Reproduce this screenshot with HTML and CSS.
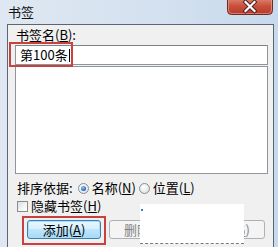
FILE: index.html
```html
<!DOCTYPE html>
<html lang="zh">
<head>
<meta charset="utf-8">
<title>书签</title>
<link rel="stylesheet" href="styles.css">
</head>
<body>
<div class="window">
  <div class="titlebar">
    <span class="title">书签</span>
    <div class="close">
      <svg width="46" height="15" viewBox="0 0 46 15">
        <defs>
          <linearGradient id="cg" x1="0" y1="0" x2="0" y2="1">
            <stop offset="0" stop-color="#d9826f"/>
            <stop offset="0.45" stop-color="#c9503c"/>
            <stop offset="1" stop-color="#b8382a"/>
          </linearGradient>
        </defs>
        <path d="M0.5 -1 V10.5 Q0.5 14.5 4.5 14.5 H41.5 Q45.5 14.5 45.5 10.5 V-1" fill="url(#cg)" stroke="#6e2a22"/>
        <path d="M1.5 -1 V10 Q1.5 13.5 5 13.5 H41 Q44.5 13.5 44.5 10 V-1" fill="none" stroke="#e9a898" stroke-opacity="0.6"/>
        <path d="M18.5 2 L27.5 11 M27.5 2 L18.5 11" stroke="#4a1d18" stroke-width="4" stroke-linecap="square"/>
        <path d="M18.5 2 L27.5 11 M27.5 2 L18.5 11" stroke="#ffffff" stroke-width="2.2" stroke-linecap="square"/>
      </svg>
    </div>
  </div>
  <div class="client">
    <div class="label">书签名(<u>B</u>):</div>
    <div class="textbox">第100条<span class="caret"></span></div>
    <div class="listbox"></div>
    <div class="sortrow">
      <span>排序依据:</span>
      <span class="radio first checked"></span><span>名称(<u>N</u>)</span>
      <span class="radio"></span><span>位置(<u>L</u>)</span>
    </div>
    <div class="checkrow">
      <span class="checkbox"></span><span>隐藏书签(<u>H</u>)</span>
    </div>
    <div class="buttons">
      <div class="btn focused">添加(<u>A</u>)</div>
      <div class="btn disabled">删除(<u>D</u>)</div>
      <div class="btn disabled">定位(<u>G</u>)</div>
    </div>
  </div>
  <div class="mark mark-name"></div>
  <div class="mark mark-add"></div>
  <div class="blot"><span class="dot"></span></div>
</div>
</body>
</html>
```

FILE: styles.css
```css
* { box-sizing: border-box; }
html, body { margin: 0; padding: 0; }
body {
  width: 278px;
  height: 247px;
  overflow: hidden;
  font-family: "Noto Sans CJK SC", "Noto Sans", sans-serif;
  font-size: 13px;
  color: #000;
}
u { text-decoration: underline; text-underline-offset: 1px; }

.window {
  position: relative;
  width: 278px;
  height: 247px;
  background: linear-gradient(to right, #dfe8f2 0%, #d3e0ef 60%, #c7d9ed 100%);
  display: flex;
  flex-direction: column;
}

.titlebar {
  height: 24px;
  flex: none;
  display: flex;
  justify-content: space-between;
  align-items: flex-start;
  padding-left: 8px;
  padding-right: 5px;
}
.title {
  margin-top: 4px;
  line-height: 15px;
  font-size: 13px;
  color: #111;
}
.close { width: 46px; height: 15px; }
.close svg { display: block; }

.client {
  flex: 1;
  margin: 0 4px 0 7px;
  border: 1px solid #5b6673;
  border-bottom: none;
  background: #f0f0f0;
  padding: 2px 5px 0 7px;
  display: flex;
  flex-direction: column;
}

.label {
  line-height: 15px;
  padding-left: 1px;
}

.textbox {
  margin-top: 3px;
  height: 20px;
  border: 1px solid #8f959c;
  border-top-color: #7d838a;
  background: #fff;
  padding-left: 4px;
  line-height: 18px;
  display: flex;
  align-items: center;
}
.caret {
  display: inline-block;
  width: 1px;
  height: 13px;
  background: #000;
  margin-left: 1px;
}

.listbox {
  margin-top: 1px;
  height: 108px;
  border: 1px solid #8f959c;
  background: #fff;
}

.sortrow, .checkrow {
  display: flex;
  align-items: center;
  line-height: 16px;
  height: 16px;
  padding-left: 2px;
}
.sortrow { margin-top: 6px; }
.checkrow { margin-top: 2px; }

.radio {
  width: 11px;
  height: 11px;
  border-radius: 50%;
  border: 1px solid #8a8d90;
  background: radial-gradient(circle at 40% 35%, #ffffff 0%, #e8e9ea 60%, #d0d2d4 100%);
  margin: 0 3px 0 3px;
  flex: none;
  position: relative;
}
.radio.first { margin-left: 5px; }
.radio.checked::after {
  content: "";
  position: absolute;
  left: 2px;
  top: 2px;
  width: 5px;
  height: 5px;
  border-radius: 50%;
  background: radial-gradient(circle at 40% 35%, #9fd0f5 0%, #2b78c8 55%, #0e3f84 100%);
}

.checkbox {
  width: 11px;
  height: 11px;
  border: 1px solid #8a8d90;
  background: linear-gradient(135deg, #dcdee0 0%, #f4f5f6 60%, #ffffff 100%);
  margin-right: 3px;
  flex: none;
}

.buttons {
  margin-top: 6px;
  padding-left: 12px;
  display: flex;
  gap: 8px;
}
.btn {
  width: 74px;
  height: 19px;
  border-radius: 3px;
  text-align: center;
  line-height: 17px;
  font-size: 13px;
}
.btn.focused {
  border: 1px solid #3c7fb1;
  background: linear-gradient(to bottom, #eaf6fd 0%, #d9f0fc 45%, #bee6fd 50%, #a7d9f5 100%);
  box-shadow: inset 0 0 0 1px #a6e0f6;
  color: #000;
}
.btn.disabled {
  border: 1px solid #adb2b5;
  background: #f4f4f4;
  color: #838383;
}

.mark {
  position: absolute;
  border: 2px solid #c8413f;
}
.mark-name { left: 9px; top: 42px; width: 64px; height: 25px; }
.mark-add { left: 22px; top: 216px; width: 84px; height: 29px; }

.blot {
  position: absolute;
  left: 140px;
  top: 204px;
  width: 104px;
  height: 40px;
  background: #fff;
  border-bottom: 1px dashed #7a7a7a;
}
.dot {
  position: absolute;
  left: 1px;
  top: 5px;
  width: 2px;
  height: 2px;
  background: #3a7fd0;
}
```
